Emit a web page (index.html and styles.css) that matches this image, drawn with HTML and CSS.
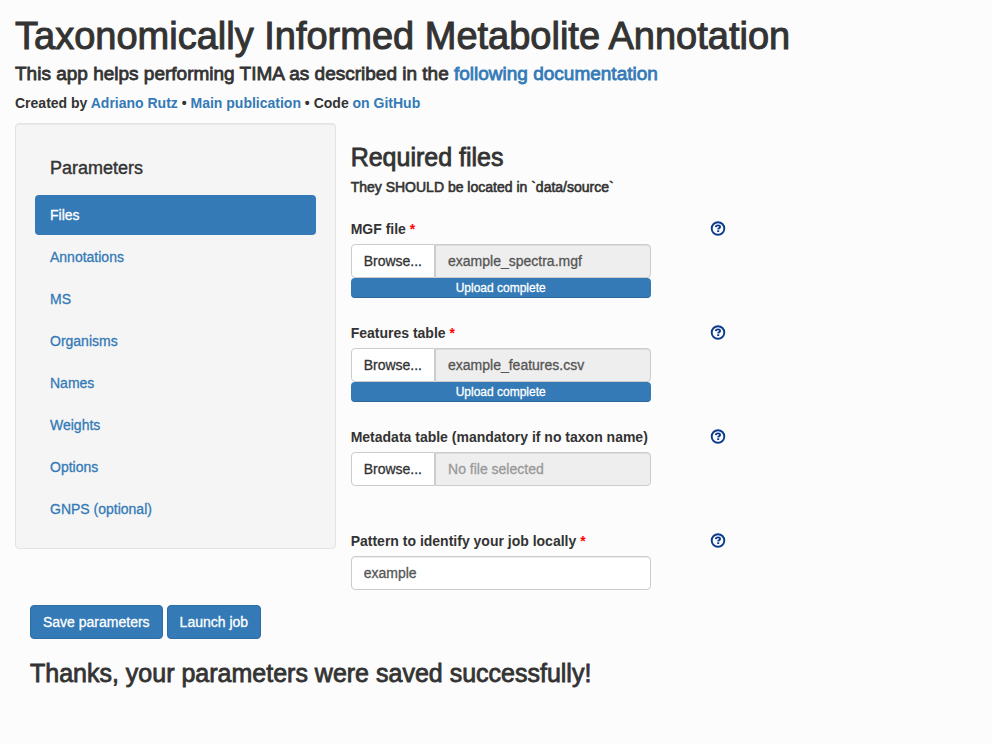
FILE: index.html
```
<!DOCTYPE html>
<html lang="en">
<head>
<meta charset="utf-8">
<meta name="viewport" content="width=device-width, initial-scale=1">
<title>Taxonomically Informed Metabolite Annotation</title>
<link rel="stylesheet" href="styles.css">
</head>
<body>
<svg class="sprite" aria-hidden="true">
  <symbol id="help" viewBox="0 0 16 16">
    <circle cx="8" cy="7.500" r="6.300" fill="none" stroke="currentColor" stroke-width="1.900"/>
    <path d="M5.800 6.100C5.900 4.900 6.800 4.400 8 4.400c1.300 0 2.100.6 2.100 1.500C10.100 7.100 8.200 7.200 8.200 8.400" fill="none" stroke="currentColor" stroke-width="1.900"/>
    <path d="M7.200 9.300h2v1.700h-2z" fill="currentColor"/>
  </symbol>
</svg>
<header class="page-header">
  <h1>Taxonomically Informed Metabolite Annotation</h1>
  <h4>This app helps performing TIMA as described in the <a href="#documentation">following documentation</a></h4>
  <h5 class="strong">Created by <a href="#author">Adriano Rutz</a> • <a href="#publication">Main publication</a> • Code <a href="#code">on GitHub</a></h5>
</header>
<main>
  <div class="columns">
    <nav class="well" aria-label="Parameters">
      <div class="nav-title">Parameters</div>
      <ul class="pills">
        <li><a class="active" href="#files">Files</a></li>
        <li><a href="#annotations">Annotations</a></li>
        <li><a href="#ms">MS</a></li>
        <li><a href="#organisms">Organisms</a></li>
        <li><a href="#names">Names</a></li>
        <li><a href="#weights">Weights</a></li>
        <li><a href="#options">Options</a></li>
        <li><a href="#gnps">GNPS (optional)</a></li>
      </ul>
    </nav>
    <section class="panel" id="files">
      <h3>Required files</h3>
      <h5>They SHOULD be located in `data/source`</h5>
      <div class="field">
        <div class="field-head"><label for="mgf">MGF file <span class="required">*</span></label><button class="help" type="button" aria-label="Help"><svg><use href="#help"/></svg></button></div>
        <div class="file-group"><button class="browse" type="button">Browse...</button><input class="control" id="mgf" type="text" readonly value="example_spectra.mgf"></div>
        <div class="progress">Upload complete</div>
      </div>
      <div class="field">
        <div class="field-head"><label for="features">Features table <span class="required">*</span></label><button class="help" type="button" aria-label="Help"><svg><use href="#help"/></svg></button></div>
        <div class="file-group"><button class="browse" type="button">Browse...</button><input class="control" id="features" type="text" readonly value="example_features.csv"></div>
        <div class="progress">Upload complete</div>
      </div>
      <div class="field">
        <div class="field-head"><label for="metadata">Metadata table (mandatory if no taxon name)</label><button class="help" type="button" aria-label="Help"><svg><use href="#help"/></svg></button></div>
        <div class="file-group"><button class="browse" type="button">Browse...</button><input class="control" id="metadata" type="text" readonly placeholder="No file selected"></div>
      </div>
      <div class="field">
        <div class="field-head"><label for="pattern">Pattern to identify your job locally <span class="required">*</span></label><button class="help" type="button" aria-label="Help"><svg><use href="#help"/></svg></button></div>
        <input class="control text" id="pattern" type="text" value="example">
      </div>
    </section>
  </div>
  <div class="actions">
    <button class="primary" type="button">Save parameters</button>
    <button class="primary" type="button">Launch job</button>
  </div>
  <h3 class="message">Thanks, your parameters were saved successfully!</h3>
</main>
</body>
</html>
```
FILE: styles.css
```
* { box-sizing: border-box; }
body {
  margin: 0;
  padding: 16px 15px;
  background: #fcfcfc;
  color: #333;
  font: 14px/20px "Liberation Sans", Arial, sans-serif;
  -webkit-text-stroke: 0.3px;
}
a { color: #337ab7; text-decoration: none; }
.sprite { display: none; }
h1, h3, h4, h5 { margin: 0; font-weight: 400; -webkit-text-stroke: 0.8px; }
h1 { font-size: 38px; line-height: 40px; -webkit-text-stroke: 1px; }
h3 { font-size: 25px; line-height: 28px; }
h4 { margin-top: 8px; font-size: 19px; line-height: 20px; }
h5 { margin-top: 8px; font-size: 14px; line-height: 16px; -webkit-text-stroke: 0.6px; }
.page-header h5 { margin-top: 11px; }
h5.strong { font-weight: 700; -webkit-text-stroke: 0; }
.page-header { margin-bottom: 12px; }
.columns { display: grid; grid-template-columns: 1fr 2fr; align-items: start; }
.well {
  padding: 19px;
  background: #f5f5f5;
  border: 1px solid #e3e3e3;
  border-radius: 4px;
  box-shadow: inset 0 1px 1px rgba(0, 0, 0, .05);
}
.nav-title { padding: 15px 15px 17px; font-size: 18px; line-height: 20px; -webkit-text-stroke: 0.4px; }
.pills { display: grid; gap: 2px; margin: 0; padding: 0; list-style: none; }
.pills a { display: block; padding: 10px 15px; border-radius: 4px; }
.pills .active { background: #337ab7; color: #fff; }
.panel { padding: 20px 0 0 15px; }
.panel h5 { margin-bottom: 24px; }
.field { min-height: 104px; }
.field:last-child { min-height: 0; }
.field-head { display: flex; align-items: center; justify-content: space-between; width: 375px; max-width: 100%; height: 20px; margin-bottom: 5px; }
label { font-weight: 700; -webkit-text-stroke: 0; }
.required { color: red; }
.help { display: block; padding: 0; border: 0; background: none; color: #0b3b8c; }
.help svg { display: block; width: 16px; height: 16px; }
.file-group, .control.text, .progress { width: 300px; max-width: 100%; }
.file-group { display: flex; }
button, input { font: inherit; -webkit-text-stroke: inherit; }
.browse { padding: 6px 12px; border: 1px solid #ccc; border-radius: 4px 0 0 4px; background: #fff; color: #333; }
.control {
  flex: 1;
  min-width: 0;
  height: 34px;
  padding: 6px 12px;
  border: 1px solid #ccc;
  border-radius: 4px;
  background: #fff;
  color: #555;
  box-shadow: inset 0 1px 1px rgba(0, 0, 0, .075);
}
.control.text { display: block; }
.control::placeholder { color: #999; opacity: 1; }
.file-group .control { border-radius: 0 4px 4px 0; background: #eee; }
.progress {
  border-radius: 4px;
  background: #337ab7;
  color: #fff;
  font-size: 12px;
  text-align: center;
  box-shadow: inset 0 -1px 0 rgba(0, 0, 0, .15);
}
.actions { display: flex; gap: 4px; margin-top: 15px; padding-left: 15px; }
.primary { padding: 6px 12px; border: 1px solid #2e6da4; border-radius: 4px; background: #337ab7; color: #fff; }
.message { margin-top: 20px; padding-left: 15px; }
```
